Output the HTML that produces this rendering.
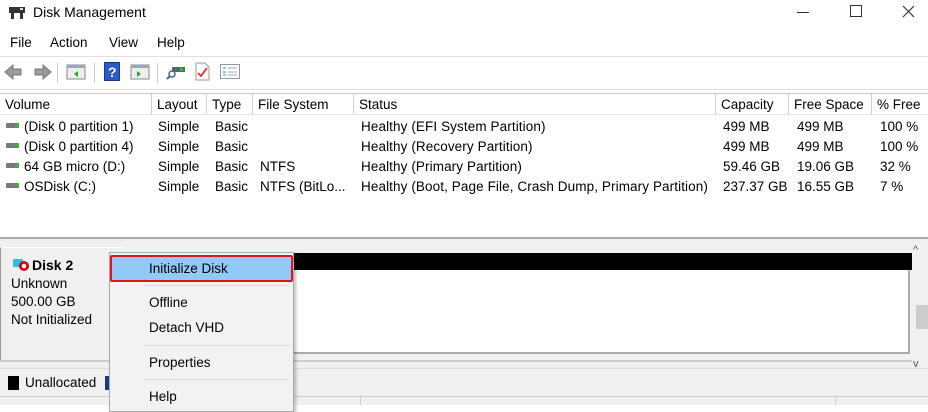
<!DOCTYPE html>
<html><head><style>
*{margin:0;padding:0;box-sizing:border-box}
body{width:928px;height:405px;overflow:hidden;background:#fff;font-family:"Liberation Sans",sans-serif;font-size:13.5px;color:#000;position:relative}
.a{position:absolute;white-space:nowrap}
.hd{position:absolute;top:94px;height:21px;border-right:1px solid #cfcfcf;border-bottom:1px solid #e5e5e5;padding:3px 0 0 5px;font-size:13.5px}
.sep{position:absolute;top:63px;width:1px;height:20px;background:#ccc}
.vi{position:absolute;left:6px;width:13px;height:5px;background:#777;border-radius:1px}
.vi:after{content:"";position:absolute;right:1px;top:1px;width:3px;height:3px;background:#2c2}
</style></head><body>
<svg class="a" style="left:8px;top:5px" width="18" height="16"><rect x="1" y="2" width="16" height="6" fill="#333"/><rect x="3" y="8" width="3" height="6" fill="#333"/><rect x="12" y="8" width="3" height="6" fill="#333"/><rect x="12" y="3" width="3" height="2" fill="#ddd"/></svg>
<div class="a" style="left:33px;top:4px;font-size:14px">Disk Management</div>
<div class="a" style="left:797px;top:12px;width:12px;height:1px;background:#333"></div>
<div class="a" style="left:850px;top:5px;width:12px;height:12px;border:1px solid #333"></div>
<svg class="a" style="left:902px;top:5px" width="13" height="13"><path d="M1 1L12 12M12 1L1 12" stroke="#333" stroke-width="1.2"/></svg>
<div class="a" style="left:10px;top:35px">File</div>
<div class="a" style="left:50px;top:35px">Action</div>
<div class="a" style="left:109px;top:35px">View</div>
<div class="a" style="left:157px;top:35px">Help</div>
<div class="a" style="left:0;top:56px;width:928px;height:1px;background:#e0e0e0"></div>
<svg class="a" style="left:4px;top:63px" width="48" height="18"><path d="M1 9 L9 2 V6 H17 V12 H9 V16 Z" fill="#999" stroke="#777"/><path d="M47 9 L39 2 V6 H31 V12 H39 V16 Z" fill="#999" stroke="#777"/></svg>
<div class="sep" style="left:57px"></div>
<svg class="a" style="left:66px;top:64px" width="20" height="16"><rect x="1" y="1" width="18" height="14" fill="#eee" stroke="#888"/><rect x="1" y="1" width="18" height="3" fill="#9ab"/><path d="M12 7 L8 10 L12 13Z" fill="#2a2"/></svg>
<div class="sep" style="left:94px"></div>
<svg class="a" style="left:104px;top:62px" width="16" height="19"><rect x="0.5" y="0.5" width="15" height="18" fill="#2a5bc8" stroke="#1a3a88"/><text x="4" y="15" fill="#fff" font-size="14" font-family="Liberation Sans" font-weight="bold">?</text></svg>
<svg class="a" style="left:130px;top:64px" width="20" height="16"><rect x="1" y="1" width="18" height="14" fill="#eee" stroke="#888"/><rect x="1" y="1" width="18" height="3" fill="#9ab"/><path d="M7 7 L11 10 L7 13Z" fill="#2a2"/></svg>
<div class="sep" style="left:157px"></div>
<svg class="a" style="left:166px;top:64px" width="20" height="16"><rect x="6" y="3" width="13" height="5" fill="#566" /><rect x="14" y="4" width="3" height="3" fill="#2c2"/><circle cx="6" cy="10" r="3" fill="none" stroke="#469" stroke-width="1.5"/><path d="M4 12 L1 15" stroke="#469" stroke-width="2"/></svg>
<svg class="a" style="left:195px;top:62px" width="15" height="19"><path d="M1 1 H10 L14 5 V18 H1Z" fill="#fff" stroke="#999"/><path d="M3 11 L6 14 L12 6" stroke="#d33" stroke-width="1.8" fill="none"/></svg>
<svg class="a" style="left:220px;top:64px" width="20" height="15"><rect x="0.5" y="0.5" width="19" height="14" fill="#fff" stroke="#89a"/><path d="M3 4h3M3 8h3M3 11h3" stroke="#38c"/><path d="M8 4h9M8 8h9M8 11h9" stroke="#aaa"/></svg>
<div class="a" style="left:0;top:89px;width:928px;height:1px;background:#ddd"></div>
<div class="a" style="left:0;top:93px;width:928px;height:1px;background:#ccc"></div>
<div class="hd" style="left:0;width:152px">Volume</div>
<div class="hd" style="left:152px;width:55px">Layout</div>
<div class="hd" style="left:207px;width:46px">Type</div>
<div class="hd" style="left:253px;width:101px">File System</div>
<div class="hd" style="left:354px;width:362px">Status</div>
<div class="hd" style="left:716px;width:73px">Capacity</div>
<div class="hd" style="left:789px;width:83px">Free Space</div>
<div class="hd" style="left:872px;width:56px;border-right:none">% Free</div>
<div class="vi" style="top:123px"></div><div class="vi" style="top:143px"></div><div class="vi" style="top:163px"></div><div class="vi" style="top:183px"></div>
<div class="a" style="left:24px;top:117px;line-height:20px">(Disk 0 partition 1)<br>(Disk 0 partition 4)<br>64 GB micro (D:)<br>OSDisk (C:)</div>
<div class="a" style="left:158px;top:117px;line-height:20px">Simple<br>Simple<br>Simple<br>Simple</div>
<div class="a" style="left:215px;top:117px;line-height:20px">Basic<br>Basic<br>Basic<br>Basic</div>
<div class="a" style="left:260px;top:117px;line-height:20px"><br><br>NTFS<br>NTFS (BitLo...</div>
<div class="a" style="left:361px;top:117px;line-height:20px;letter-spacing:0.1px">Healthy (EFI System Partition)<br>Healthy (Recovery Partition)<br>Healthy (Primary Partition)<br>Healthy (Boot, Page File, Crash Dump, Primary Partition)</div>
<div class="a" style="left:723px;top:117px;line-height:20px">499 MB<br>499 MB<br>59.46 GB<br>237.37 GB</div>
<div class="a" style="left:797px;top:117px;line-height:20px">499 MB<br>499 MB<br>19.06 GB<br>16.55 GB</div>
<div class="a" style="left:880px;top:117px;line-height:20px">100 %<br>100 %<br>32 %<br>7 %</div>
<div class="a" style="left:0;top:237px;width:928px;height:5px;background:#eee;border-top:2px solid #aaa"></div>
<div class="a" style="left:0;top:242px;width:928px;height:163px;background:#f0f0f0"></div>
<div class="a" style="left:0;top:247px;width:121px;height:114px;border-left:1px solid #999;border-top:1px solid #fff;background:#f0f0f0"></div>
<div class="a" style="left:0;top:360px;width:912px;height:2px;background:#ccc"></div>
<div class="a" style="left:120px;top:253px;width:172px;height:16px;background:#000"></div>
<div class="a" style="left:290px;top:253px;width:622px;height:17px;background:#000"></div>
<div class="a" style="left:290px;top:270px;width:620px;height:84px;background:#fff;border-right:2px solid #aaa;border-bottom:2px solid #aaa"></div>
<div class="a" style="left:912px;top:242px;width:16px;height:122px;background:#f0f0f0"></div>
<div class="a" style="left:916px;top:305px;width:12px;height:24px;background:#ccc"></div>
<div class="a" style="left:913px;top:244px;font-size:11px;color:#555">^</div>
<div class="a" style="left:913px;top:358px;font-size:11px;color:#555">v</div>
<svg class="a" style="left:13px;top:258px" width="18" height="14"><rect x="0" y="1" width="10" height="8" fill="#3bd" rx="1"/><circle cx="11" cy="8" r="5" fill="#c01"/><circle cx="11" cy="8" r="2.3" fill="#fff"/></svg>
<div class="a" style="left:32px;top:257px;font-weight:bold;font-size:14px">Disk 2</div>
<div class="a" style="left:11px;top:275px;line-height:18px">Unknown<br>500.00 GB<br>Not Initialized</div>
<div class="a" style="left:0;top:368px;width:928px;height:1px;background:#ddd"></div>
<div class="a" style="left:8px;top:376px;width:11px;height:14px;background:#000"></div>
<div class="a" style="left:25px;top:375px">Unallocated</div>
<div class="a" style="left:105px;top:376px;width:4px;height:14px;background:#1a3a8a"></div>
<div class="a" style="left:0;top:396px;width:928px;height:1px;background:#ccc"></div>
<div class="a" style="left:360px;top:397px;width:1px;height:8px;background:#ccc"></div>
<div class="a" style="left:835px;top:397px;width:1px;height:8px;background:#ccc"></div>
<div class="a" style="left:109px;top:252px;width:185px;height:160px;background:#f2f2f2;border:1px solid #aaa;box-shadow:2px 2px 3px rgba(0,0,0,.25)"></div>
<div class="a" style="left:110px;top:255px;width:183px;height:27px;background:#91c9f7;border:2px solid #e0141e;border-radius:2px"></div>
<div class="a" style="left:149px;top:261px">Initialize Disk</div>
<div class="a" style="left:144px;top:285px;width:145px;height:1px;background:#ddd"></div>
<div class="a" style="left:149px;top:295px">Offline</div>
<div class="a" style="left:149px;top:320px">Detach VHD</div>
<div class="a" style="left:144px;top:345px;width:145px;height:1px;background:#ddd"></div>
<div class="a" style="left:149px;top:355px">Properties</div>
<div class="a" style="left:144px;top:379px;width:145px;height:1px;background:#ddd"></div>
<div class="a" style="left:149px;top:389px">Help</div>
</body></html>
